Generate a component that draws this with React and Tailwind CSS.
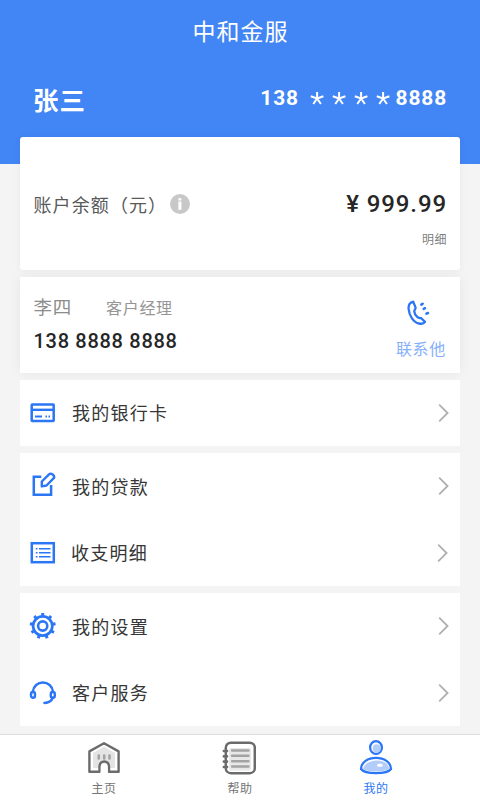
import React from "react";

const CJK = "font-['Noto_Sans_CJK_SC',sans-serif]";
const NUM = "font-[Roboto,'Noto_Sans_CJK_SC',sans-serif]";

function InfoIcon() {
  return (
    <svg width="20" height="20" viewBox="0 0 20 20">
      <circle cx="10" cy="10" r="10" fill="#c8c8c8" />
      <rect x="8.4" y="4.2" width="3" height="2.3" fill="#fff" />
      <rect x="8.4" y="7.5" width="3" height="8.3" fill="#fff" />
    </svg>
  );
}

function PhoneIcon() {
  return (
    <svg className="mr-1" width="24" height="26" viewBox="0 0 24 26" fill="none" stroke="#2b76f5" strokeWidth="2.3" strokeLinecap="round" strokeLinejoin="round">
      <path d="M6.200 1.600C2.900 2.400 1.300 5.300 1.600 9C2.200 15.500 6.500 22.500 12 23.500C14.500 24 17.100 23.300 18 21.900L14.300 18.200C12.500 17.900 11.600 18.200 10.500 17.200C8.600 15.500 7 12.700 7.400 10.600C7.700 9.300 9 8.600 8.500 7.400Z" />
      <path d="M14.300 4.600L15.700 3.700M16.600 9L18 8.200M19.400 13.700L21 13" strokeWidth="2.500" />
    </svg>
  );
}

function CardIcon() {
  return (
    <svg width="26" height="26" viewBox="0 0 26 26" fill="none" stroke="#2b76f5">
      <rect x="1.700" y="4.500" width="22" height="16.500" rx="0.500" strokeWidth="2.500" />
      <path d="M1.700 9.800H23.700" strokeWidth="2.400" />
      <path d="M5 16.500H12M15.500 16.500H17M18.500 16.500H20" strokeWidth="1.900" />
    </svg>
  );
}

function EditIcon() {
  return (
    <svg className="-mt-1" width="26" height="26" viewBox="0 0 26 26" fill="none" stroke="#2b76f5" strokeWidth="2.500">
      <path d="M11.300 5.800H3.800V23.700H21.100V14" />
      <path d="M11.800 15.400L11.800 10.500L19 3.300C21 1.400 25 4.500 24 6.900L16.500 14.500Z" strokeWidth="2.400" strokeLinejoin="round" />
    </svg>
  );
}

function ListIcon() {
  return (
    <svg width="26" height="26" viewBox="0 0 26 26" fill="none" stroke="#2b76f5">
      <rect x="1.800" y="3.200" width="22" height="19" strokeWidth="2.500" />
      <path d="M9 8.800H20.500M9 12.800H20.500M9 16.800H20.500" strokeWidth="1.500" />
      <path d="M5.800 8.800H7.500M5.800 12.800H7.500M5.800 16.800H7.500" strokeWidth="1.500" />
    </svg>
  );
}

function GearIcon() {
  const teeth = [0, 40, 80, 120, 160, 200, 240, 280, 320];
  return (
    <svg width="28" height="28" viewBox="0 0 28 28" fill="none" stroke="#2b76f5">
      <circle cx="13.700" cy="14" r="9.600" strokeWidth="2.700" />
      <circle cx="13.700" cy="14" r="4.600" strokeWidth="2.600" />
      {teeth.map((a) => (
        <path key={a} d="M13.700 4V1" strokeWidth="3" transform={`rotate(${a} 13.7 14)`} />
      ))}
    </svg>
  );
}

function HeadsetIcon() {
  return (
    <svg width="28" height="26" viewBox="0 0 28 26" fill="none" stroke="#2b76f5" strokeWidth="2.400" strokeLinecap="round">
      <path d="M3.900 11.500C4.500 6.200 8.700 2.500 13.900 2.500S23.300 6.200 23.900 11.500" />
      <rect x="2" y="12" width="4" height="5.800" rx="2" />
      <rect x="21.800" y="12" width="4" height="5.800" rx="2" />
      <path d="M23.600 18C22.600 20.800 19.500 22.700 15.400 23" />
    </svg>
  );
}

function Chevron() {
  return (
    <svg width="11" height="20" viewBox="0 0 11 20" fill="none" stroke="#b0b0b0" strokeWidth="1.800">
      <path d="M1.200 1.600L9.600 10L1.200 18.400" />
    </svg>
  );
}

function HomeIcon() {
  return (
    <svg width="34" height="34" viewBox="0 0 34 34" fill="none" stroke="#6b6b6b" strokeWidth="2.400" strokeLinejoin="round">
      <path d="M6 12L17 5.500L28 12V27H6Z" fill="#e4e4e4" stroke="none" />
      <path d="M2.400 10.400L17 2.200L31.600 10.400V30.800H22V25.500C22 18.800 12.500 18.800 12.500 25.500V30.800H2.400Z" />
      <path d="M13.800 32.500V25.500C13.800 21 20.700 21 20.700 25.500V32.500Z" fill="#fff" stroke="none" />
      <path d="M11.800 14.500V17.500M17.200 14.500V17.500M22.500 14.500V17.500" stroke="#a3a3a3" strokeWidth="2.600" strokeLinecap="round" />
    </svg>
  );
}

function NotebookIcon() {
  return (
    <svg className="mr-0.5" width="34" height="34" viewBox="0 0 34 34" fill="none" stroke="#6b6b6b">
      <rect x="7" y="7" width="22" height="22.500" rx="2" fill="#e8e8e8" stroke="none" />
      <rect x="3.800" y="1.700" width="29" height="30.500" rx="5" strokeWidth="2.500" />
      <path d="M10 9.500H26.500M10 14.800H26.500M10 20.200H26.500M10 25.500H26.500" stroke="#a3a3a3" strokeWidth="2.400" strokeLinecap="round" />
      <path d="M1.900 10H5M1.900 15.300H5M1.900 20.600H5M1.900 26H5" strokeWidth="2.700" strokeLinecap="round" />
    </svg>
  );
}

function UserIcon() {
  return (
    <svg width="34" height="36" viewBox="0 0 34 36" fill="none" stroke="#2b76f5" strokeWidth="2.300">
      <ellipse cx="17" cy="8.500" rx="5.900" ry="6.400" fill="#fff" />
      <ellipse cx="17.700" cy="9.500" rx="3.900" ry="4.200" fill="#b3cdfb" stroke="none" />
      <path d="M2 30C2 23.300 9 18.800 17 18.800S32 23.300 32 30C28 35.500 6 35.500 2 30Z" fill="#fff" />
      <path d="M4 30C5 25 11 21.400 18 21.400S29.500 25 30.300 29.800C26 33.500 8 33.500 4 30Z" fill="#b3cdfb" stroke="none" />
      <rect x="18" y="24.700" width="5.500" height="3" rx="1.500" fill="#fff" stroke="none" />
    </svg>
  );
}

function Row({ icon, label, shift }) {
  return (
    <div className="flex h-[66.5px] items-center pr-[11px] pl-2">
      <span className="flex w-[30px] justify-center">{icon}</span>
      <span className={`-mt-px grow text-[18px] leading-6 tracking-[1.25px] text-[#363636] ${shift ? "pl-[13px]" : "pl-[14px]"}`}>{label}</span>
      <span className={shift ? "pr-px" : ""}><Chevron /></span>
    </div>
  );
}

function Tab({ icon, label, active }) {
  return (
    <div className="flex flex-col items-center">
      <div className="flex h-10 items-end">{icon}</div>
      <span className={`mt-1 text-[12px] leading-[18px] tracking-[0.6px] ${active ? "text-[#2b76f5]" : "text-[#757575]"}`}>{label}</span>
    </div>
  );
}

export default function App() {
  return (
    <div className={`flex h-[800px] w-[480px] flex-col overflow-hidden bg-[#f4f4f4] ${CJK}`}>
      <header className="h-[164px] shrink-0 bg-[#4285f4] text-white">
        <h1 className="pt-[13px] pl-px text-center text-[23px] leading-[34px] tracking-[1px]">中和金服</h1>
        <div className="flex items-center justify-between pt-8 pr-[33px] pl-[33px]">
          <span className="text-[25.5px] leading-10 font-bold tracking-[1px]">张三</span>
          <span className={`-mt-[2px] flex items-center text-[21px] leading-10 font-bold tracking-[0.8px] ${NUM}`}>
            138
            <span className="flex pl-2">
              {[0, 1, 2, 3].map((i) => (
                <svg key={i} className="mr-[2px] ml-[1px]" width="19.200" height="14" viewBox="0 0 19 14" fill="none" stroke="#fff" strokeWidth="2">
                  <path d="M9 7.500V1M9 7.500L2.700 5.300M9 7.500L15.300 5.300M9 7.500L5.200 13M9 7.500L12.800 13" />
                </svg>
              ))}
            </span>
            8888
          </span>
        </div>
      </header>
      <main className="-mt-[27px] flex flex-col px-5">
        <section className="flex h-[133px] flex-col rounded-[3px] bg-white pr-[13px] pl-[13.5px] pt-[52px] shadow-[0_0_8px_rgba(0,0,0,0.05)]">
          <div className="flex h-[30px] items-center">
            <span className="-mt-px w-[136.5px] text-[18px] leading-[30px] tracking-[1.1px] whitespace-nowrap text-[#595959]">账户余额（元）</span>
            <InfoIcon />
            <span className={`ml-auto text-[24px] leading-[30px] font-medium tracking-[0.9px] text-[#262626] ${NUM}`}>¥ 999.99</span>
          </div>
          <span className="mt-[11px] text-right text-[12px] leading-[18px] tracking-[0.5px] text-[#808080]">明细</span>
        </section>
        <section className="mt-[7px] flex h-24 justify-between bg-white pr-[14px] pl-[13.5px] shadow-[0_0_12px_rgba(0,0,0,0.06)]">
          <div className="flex flex-col pt-[15px]">
            <div className="flex items-center leading-7">
              <span className="-mt-px w-[72.5px] text-[18.5px] tracking-[0.8px] text-[#8c8c8c]">李四</span>
              <span className="pt-px text-[16px] tracking-[0.700px] text-[#969696]">客户经理</span>
            </div>
            <span className={`mt-[6px] text-[20px] leading-7 font-medium tracking-[0.7px] text-[#262626] ${NUM}`}>138 8888 8888</span>
          </div>
          <div className="flex flex-col items-center pt-[23px]">
            <PhoneIcon />
            <span className="mt-[10px] text-[16px] leading-6 tracking-[0.700px] text-[#85b0f9]">联系他</span>
          </div>
        </section>
        <section className="mt-[6.5px] bg-white"><Row icon={<CardIcon />} label="我的银行卡" /></section>
        <section className="mt-[7px] bg-white">
          <Row icon={<EditIcon />} label="我的贷款" />
          <Row icon={<ListIcon />} label="收支明细" shift />
        </section>
        <section className="mt-[7px] bg-white">
          <Row icon={<GearIcon />} label="我的设置" />
          <Row icon={<HeadsetIcon />} label="客户服务" />
        </section>
      </main>
      <nav className="mt-auto grid h-[66px] shrink-0 grid-cols-3 border-t border-[#dedede] bg-white px-9">
        <Tab icon={<HomeIcon />} label="主页" />
        <Tab icon={<NotebookIcon />} label="帮助" />
        <Tab icon={<UserIcon />} label="我的" active />
      </nav>
    </div>
  );
}
